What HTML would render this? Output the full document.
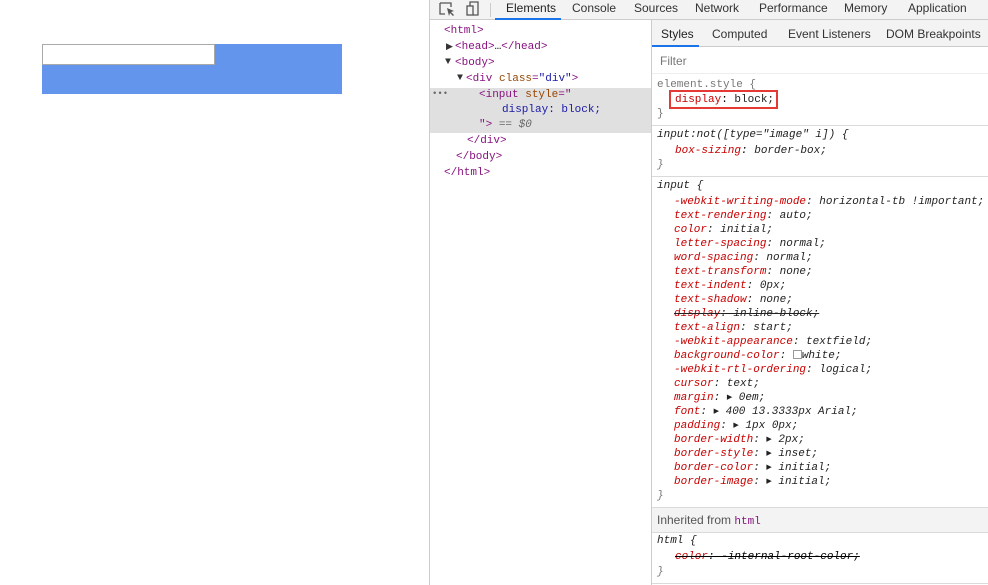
<!DOCTYPE html>
<html><head><meta charset="utf-8"><style>
*{margin:0;padding:0;box-sizing:border-box}
body{width:988px;height:585px;overflow:hidden;background:#fff;position:relative;font-family:"Liberation Sans",sans-serif}
.a{position:absolute;white-space:pre}
.m{font-family:"Liberation Mono",monospace;font-size:11px;line-height:14px}
.s{font-size:12px;color:#333}
.tag{color:#881280}.at{color:#994500}.av{color:#1a1aa6}
.p{color:#c80000}.v{color:#222}.i{font-style:italic}
.st{text-decoration:line-through}
.hl{position:absolute;left:0;right:0;height:1px;background:#dadada}
.tri{font-size:7px;font-style:normal;line-height:10px;vertical-align:1px}
.blk div{height:14px;line-height:14px;white-space:pre}
</style></head><body>
<div style="position:absolute;left:42px;top:44px;width:300px;height:50px;background:#6495ed"></div>
<div style="position:absolute;left:42px;top:44px;width:173px;height:21px;background:#fff;border:1px solid #a9a9a9"></div>

<div style="position:absolute;left:429px;top:0;width:559px;height:585px;border-left:1px solid #ccc;background:#fff">
 <div style="position:absolute;left:0;top:0;right:0;height:20px;background:#f3f3f3;border-bottom:1px solid #ccc"></div>
 <svg style="position:absolute;left:9px;top:1px" width="18" height="16" viewBox="0 0 18 16"><path d="M1 2h11v4M1 2v11h5" fill="none" stroke="#555" stroke-width="1.3"/><path d="M8 7l7 3-3 1 3 3-1 1-3-3-1 3z" fill="#555"/></svg>
 <svg style="position:absolute;left:35px;top:1px" width="16" height="16" viewBox="0 0 16 16"><rect x="2" y="5" width="6" height="9" fill="none" stroke="#555" stroke-width="1.3"/><path d="M5 5V1h8v13H8" fill="none" stroke="#555" stroke-width="1.3"/></svg>
 <div style="position:absolute;left:60px;top:3px;width:1px;height:14px;background:#ccc"></div>
 <div style="position:absolute;left:65px;top:18px;width:66px;height:2px;background:#1a73e8"></div>
 <div class="a s" style="left:76px;top:1px;color:#222">Elements</div>
 <div class="a s" style="left:142px;top:1px">Console</div>
 <div class="a s" style="left:204px;top:1px">Sources</div>
 <div class="a s" style="left:265px;top:1px">Network</div>
 <div class="a s" style="left:329px;top:1px">Performance</div>
 <div class="a s" style="left:414px;top:1px">Memory</div>
 <div class="a s" style="left:478px;top:1px">Application</div>

 <div style="position:absolute;left:0;top:88px;width:221px;height:45px;background:#e0e0e0"></div>
 <div class="a m" style="left:14px;top:24px"><span class="tag">&lt;html&gt;</span></div>
 <div class="a m" style="left:16px;top:40px;font-size:9px;color:#333">▶</div>
 <div class="a m" style="left:25px;top:40px"><span class="tag">&lt;head&gt;</span>…<span class="tag">&lt;/head&gt;</span></div>
 <div class="a m" style="left:15px;top:56px;font-size:10px;color:#333">▼</div>
 <div class="a m" style="left:25px;top:56px"><span class="tag">&lt;body&gt;</span></div>
 <div class="a m" style="left:27px;top:72px;font-size:10px;color:#333">▼</div>
 <div class="a m" style="left:36px;top:72px"><span class="tag">&lt;div </span><span class="at">class</span><span class="tag">=</span><span class="av">"div"</span><span class="tag">&gt;</span></div>
 <div class="a m" style="left:2px;top:87px;color:#666;font-size:9px">•••</div>
 <div class="a m" style="left:49px;top:88px"><span class="tag">&lt;input </span><span class="at">style</span><span class="tag">="</span></div>
 <div class="a m" style="left:72px;top:103px;color:#1a1aa6">display: block;</div>
 <div class="a m" style="left:49px;top:118px"><span class="tag">"&gt;</span> <span style="color:#666">== </span><span class="i" style="color:#666">$0</span></div>
 <div class="a m" style="left:37px;top:134px"><span class="tag">&lt;/div&gt;</span></div>
 <div class="a m" style="left:26px;top:150px"><span class="tag">&lt;/body&gt;</span></div>
 <div class="a m" style="left:14px;top:166px"><span class="tag">&lt;/html&gt;</span></div>

 <div style="position:absolute;left:221px;top:20px;width:338px;height:565px;border-left:1px solid #ccc;background:#fff">
  <div style="position:absolute;left:0;top:0;right:0;height:27px;background:#f3f3f3;border-bottom:1px solid #ccc"></div>
  <div style="position:absolute;left:0;top:25px;width:47px;height:2px;background:#1a73e8"></div>
  <div class="a s" style="left:9px;top:7px;color:#222">Styles</div>
  <div class="a s" style="left:60px;top:7px">Computed</div>
  <div class="a s" style="left:136px;top:7px">Event Listeners</div>
  <div class="a s" style="left:234px;top:7px">DOM Breakpoints</div>
  <div class="a s" style="left:8px;top:34px;color:#777">Filter</div>
  <div class="hl" style="top:53px;background:#eee"></div>
  <div class="a m" style="left:5px;top:58px;color:#777">element.style {</div>
  <div style="position:absolute;left:17px;top:70px;width:109px;height:19px;border:2px solid #e53935"></div>
  <div class="a m" style="left:23px;top:73px"><span class="p">display</span>: <span class="v">block;</span></div>
  <div class="a m" style="left:5px;top:87px;color:#777">}</div>
  <div class="hl" style="top:105px"></div>
  <div class="a m i" style="left:5px;top:108px;color:#222">input:not([type="image" i]) {</div>
  <div class="a m i" style="left:23px;top:124px"><span class="p">box-sizing</span>: <span class="v">border-box;</span></div>
  <div class="a m i" style="left:5px;top:138px;color:#777">}</div>
  <div class="hl" style="top:156px"></div>
  <div class="a m i" style="left:5px;top:159px;color:#222">input {</div>
  <div class="m i blk" style="position:absolute;left:22px;top:175px;color:#222"><div><span class="p">-webkit-writing-mode</span>: horizontal-tb !important;</div><div><span class="p">text-rendering</span>: auto;</div><div><span class="p">color</span>: initial;</div><div><span class="p">letter-spacing</span>: normal;</div><div><span class="p">word-spacing</span>: normal;</div><div><span class="p">text-transform</span>: none;</div><div><span class="p">text-indent</span>: 0px;</div><div><span class="p">text-shadow</span>: none;</div><div><span class="st"><span class="p">display</span>: inline-block;</span></div><div><span class="p">text-align</span>: start;</div><div><span class="p">-webkit-appearance</span>: textfield;</div><div><span class="p">background-color</span>: <span style="display:inline-block;width:9px;height:9px;border:1px solid #999;vertical-align:-1px"></span>white;</div><div><span class="p">-webkit-rtl-ordering</span>: logical;</div><div><span class="p">cursor</span>: text;</div><div><span class="p">margin</span>: <span class="tri">▶</span> 0em;</div><div><span class="p">font</span>: <span class="tri">▶</span> 400 13.3333px Arial;</div><div><span class="p">padding</span>: <span class="tri">▶</span> 1px 0px;</div><div><span class="p">border-width</span>: <span class="tri">▶</span> 2px;</div><div><span class="p">border-style</span>: <span class="tri">▶</span> inset;</div><div><span class="p">border-color</span>: <span class="tri">▶</span> initial;</div><div><span class="p">border-image</span>: <span class="tri">▶</span> initial;</div></div>
  <div class="a m i" style="left:5px;top:469px;color:#777">}</div>
  <div class="hl" style="top:487px"></div>
  <div style="position:absolute;left:0;top:488px;right:0;height:25px;background:#f3f3f3;border-bottom:1px solid #dadada"></div>
  <div class="a s" style="left:5px;top:493px;color:#555">Inherited from <span class="tag m" style="font-size:11px">html</span></div>
  <div class="a m i" style="left:5px;top:514px;color:#222">html {</div>
  <div class="a m i" style="left:23px;top:530px"><span class="st"><span class="p">color</span>: -internal-root-color;</span></div>
  <div class="a m i" style="left:5px;top:545px;color:#777">}</div>
  <div class="hl" style="top:563px"></div>
 </div>
</div>
</body></html>
